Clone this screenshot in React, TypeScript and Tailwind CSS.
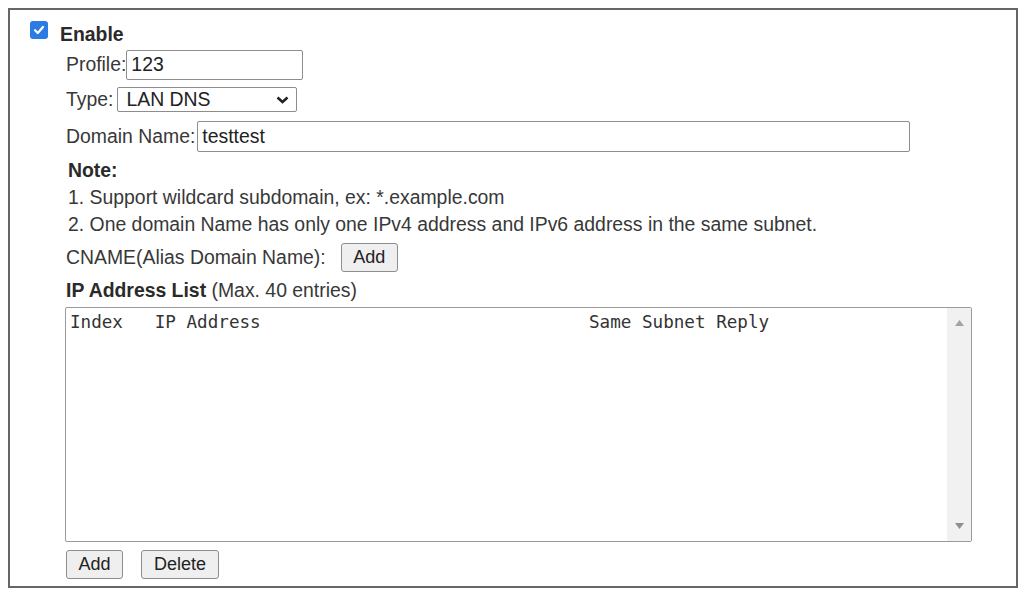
export default function App() {
  return (
    <div className="h-[590px] w-[1035px] bg-white pl-[8px] pt-[8px] font-['Liberation_Sans',Arial,sans-serif] text-[19.4px] text-[#383838]">
      <div className="flex h-[580px] w-[1010px] flex-col border-2 border-[#666] pl-[20px] pt-[9px]">
        {/* enable toggle */}
        <div className="flex h-[27px] items-start">
          <span className="mt-[2px] flex h-[18px] w-[18px] items-center justify-center rounded-[3px] bg-[#2c7be5]">
            <svg width="12" height="12" viewBox="0 0 12 12">
              <path d="M2 6.2 4.8 9 10 3" fill="none" stroke="white" strokeWidth="2.2" strokeLinecap="round" strokeLinejoin="round" />
            </svg>
          </span>
          <span className="ml-[12px] mt-[1px] font-bold text-[#2a2a2a]">Enable</span>
        </div>

        <div className="ml-[36px] flex flex-col">
          <div className="mt-[4px] flex h-[30px] items-center">
            <span>Profile:</span>
            <div className="flex h-[30px] w-[177px] items-center rounded-[2px] border border-[#8d8d8d] pl-[4px] text-[#222]">
              123
            </div>
          </div>

          <div className="mt-[7px] flex h-[25px] items-center">
            <span>Type:</span>
            <div className="ml-[4px] flex h-[25px] w-[180px] items-center justify-between rounded-[2px] border border-[#8d8d8d] pl-[8px] pr-[7px] text-[#222]">
              <span>LAN DNS</span>
              <svg width="13" height="8" viewBox="0 0 13 8">
                <path d="M1.5 1.5 6.5 6 11.5 1.5" fill="none" stroke="#222" strokeWidth="2.6" />
              </svg>
            </div>
          </div>

          <div className="mt-[9px] flex h-[31px] items-center">
            <span>Domain Name:</span>
            <div className="ml-[2px] flex h-[31px] w-[713px] items-center rounded-[2px] border border-[#8d8d8d] pl-[4px] text-[#222]">
              testtest
            </div>
          </div>

          <div className="ml-[2px] mt-[5px] leading-[27px]">
            <p className="font-bold text-[#2a2a2a]">Note:</p>
            <p>1. Support wildcard subdomain, ex: *.example.com</p>
            <p>2. One domain Name has only one IPv4 address and IPv6 address in the same subnet.</p>
          </div>

          <div className="mt-[5px] flex h-[29px] items-center">
            <span>CNAME(Alias Domain Name):</span>
            <button className="ml-[15px] h-[29px] w-[57px] rounded-[3px] border border-[#8d8d8d] bg-[#efefef] text-[18px] text-[#222]">
              Add
            </button>
          </div>

          <p className="mt-[5px] leading-[26px]">
            <span className="font-bold text-[#2a2a2a]">IP Address List</span> (Max. 40 entries)
          </p>

          <div className="-ml-[1px] mt-[4px] flex h-[235px] w-[907px] rounded-[2px] border border-[#9a9a9a]">
            <div className="flex-1 whitespace-pre pl-[4px] pt-[2px] font-['DejaVu_Sans_Mono',monospace] text-[17.6px] leading-[24px] text-[#333]">
              {'Index   IP Address                               Same Subnet Reply'}
            </div>
            <div className="flex w-[24px] flex-col items-center justify-between bg-[#f1f1f1] py-[12px]">
              <svg width="9" height="6" viewBox="0 0 9 6">
                <path d="M0 6 4.5 0 9 6Z" fill="#a3a3a3" />
              </svg>
              <svg width="9" height="6" viewBox="0 0 9 6">
                <path d="M0 0 4.5 6 9 0Z" fill="#8f8f8f" />
              </svg>
            </div>
          </div>

          <div className="mt-[8px] flex gap-[18px] text-[18px]">
            <button className="h-[29px] w-[57px] rounded-[3px] border border-[#8d8d8d] bg-[#efefef] text-[#222]">
              Add
            </button>
            <button className="h-[29px] w-[78px] rounded-[3px] border border-[#8d8d8d] bg-[#efefef] text-[#222]">
              Delete
            </button>
          </div>
        </div>
      </div>
    </div>
  )
}
